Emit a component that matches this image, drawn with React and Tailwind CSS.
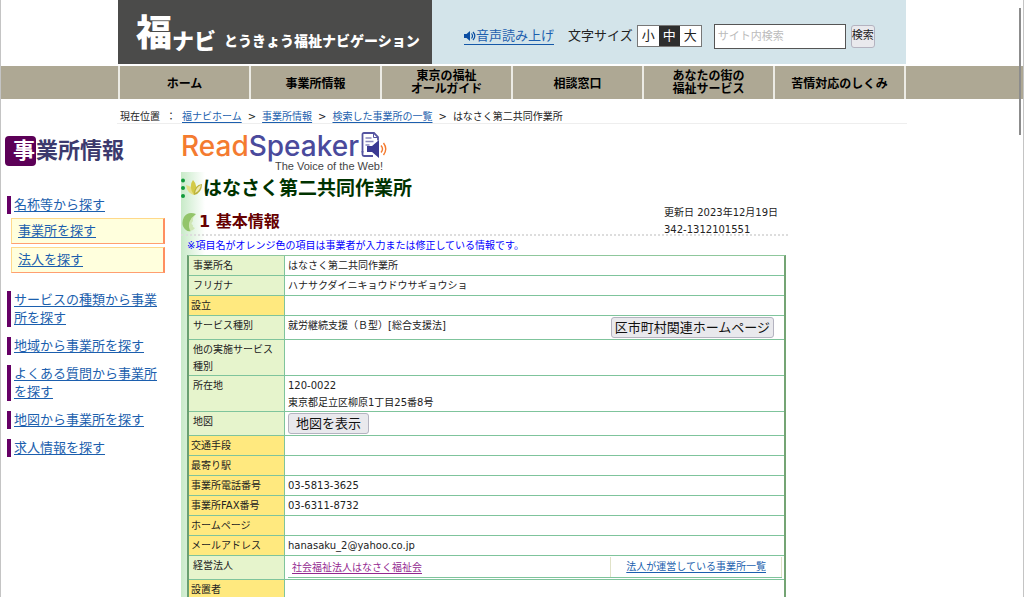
const base = "font-['DejaVu_Sans','Noto_Sans_CJK_JP',sans-serif]";

function SiteLogo() {
  return (
    <a href="#home" className="flex h-16 w-[314px] items-start bg-[#4b4b4a] pl-[18px] pt-3 font-['Noto_Sans_CJK_JP',sans-serif] font-black text-white">
      <span className="text-4xl leading-9">福</span>
      <span className="pt-[15px] text-[22px] leading-6">ナビ</span>
      <span className="pl-2 pt-[18px] text-sm leading-5">とうきょう福祉ナビゲーション</span>
    </a>
  );
}

function SoundIcon() {
  return (
    <svg viewBox="0 0 12 12" className="h-3 w-3" fill="none" stroke="#0a4da2" strokeWidth="1.2">
      <path d="M0 4h2.5L6 1v10L2.5 8H0z" fill="#0a4da2" stroke="none" />
      <path d="M7.5 3.5q2 2.5 0 5M9 2q3.6 4 0 8" />
    </svg>
  );
}

function Header() {
  const size = "h-5 w-[21px] text-[13px] leading-5";
  return (
    <header className="mx-auto flex h-16 w-[788px] bg-[#d3e4ea]">
      <SiteLogo />
      <div className="flex items-center pl-8 pt-2 text-[13px] text-[#222]">
        <a href="#voice" className="flex items-center border-b border-[#1558a8] leading-4 text-[#1c5fae]">
          <SoundIcon />
          音声読み上げ
        </a>
        <span className="pl-[14px]">文字サイズ</span>
        <div className="ml-1 flex border border-[#777] bg-white">
          <button className={size}>小</button>
          <button className={size + " bg-[#2e2e2e] text-white"}>中</button>
          <button className={size}>大</button>
        </div>
        <input
          type="text"
          aria-label="サイト内検索"
          placeholder="サイト内検索"
          className="ml-3 h-[25px] w-[132px] border border-[#555] bg-white px-[3px] text-[11px] placeholder:text-[#bbb]"
        />
        <button className="ml-[5px] h-[23px] w-6 rounded-[3px] border border-[#b4b3c0] bg-[#e9e9ed] text-[11px]">検索</button>
      </div>
    </header>
  );
}

const navItems = [
  ["ホーム"],
  ["事業所情報"],
  ["東京の福祉", "オールガイド"],
  ["相談窓口"],
  ["あなたの街の", "福祉サービス"],
  ["苦情対応のしくみ"],
];

function Nav() {
  return (
    <nav className="mt-0.5 bg-[#aea894]">
      <ul className="mx-auto flex h-[33px] w-[788px] border-l-2 border-[#ecebe4]">
        {navItems.map((lines) => (
          <li key={lines[0]} className="flex-1 border-r-2 border-[#ecebe4]">
            <a
              href="#nav"
              className={"flex h-full flex-col items-center justify-center text-xs font-bold leading-[13px] text-black " + (lines.length === 1 ? "pt-1" : "")}
            >
              {lines.map((l) => (
                <span key={l}>{l}</span>
              ))}
            </a>
          </li>
        ))}
      </ul>
    </nav>
  );
}

function Breadcrumb() {
  const link = "text-[#1c5fae] underline underline-offset-2";
  return (
    <div className="mx-auto flex h-[25px] w-[790px] items-end gap-[6px] border-b border-[#eee] pl-[3px] text-[10px] leading-3 text-[#222]">
      <span>現在位置</span>
      <span>：</span>
      <a href="#top" className={link}>福ナビホーム</a>
      <span>&gt;</span>
      <a href="#office" className={link}>事業所情報</a>
      <span>&gt;</span>
      <a href="#list" className={link}>検索した事業所の一覧</a>
      <span>&gt;</span>
      <span>はなさく第二共同作業所</span>
    </div>
  );
}

function Sidebar() {
  const item = "border-l-4 border-[#660066] pl-[3px] leading-[18px]";
  const link = "text-[#1c5fae] underline underline-offset-2";
  const sub = "block border border-b-[#ff9f70] border-l-[#ffd98a] border-r-2 border-r-[#ff8f60] border-t-[#ffd98a] bg-[#ffffdd] px-[6px] text-[13px] leading-6 text-[#1c5fae] underline underline-offset-2";
  return (
    <aside className="w-[158px] shrink-0 pl-1 pt-3 text-[13px]">
      <h2 className="flex items-center font-['Noto_Sans_CJK_JP',sans-serif] text-[22px] font-bold leading-6 text-[#3c3a6e]">
        <span className="rounded-[4px] bg-[#5c0057] pb-[6px] pl-2 pr-px text-white">事</span>
        <span className="pb-[6px]">業所情報</span>
      </h2>
      <div className="pl-[2px] pt-[30px]">
        <p className={item}><a href="#name" className={link}>名称等から探す</a></p>
        <div className="-mr-[6px] flex flex-col gap-[3px] pl-[4px] pt-1">
          <a href="#s1" className={sub}>事業所を探す</a>
          <a href="#s2" className={sub}>法人を探す</a>
        </div>
        <div className="flex flex-col gap-[10px] pt-[18px]">
          <p className={item}><a href="#kind" className={link}>サービスの種類から事業所を探す</a></p>
          <p className={item}><a href="#area" className={link}>地域から事業所を探す</a></p>
          <p className={item}><a href="#faq" className={link}>よくある質問から事業所を探す</a></p>
          <p className={item}><a href="#map" className={link}>地図から事業所を探す</a></p>
          <p className={item}><a href="#job" className={link}>求人情報を探す</a></p>
        </div>
      </div>
    </aside>
  );
}

function ReadSpeaker() {
  return (
    <a href="#readspeaker" className="flex h-10 w-[210px] items-start" aria-label="ReadSpeaker">
      <span className="flex flex-col font-['Inter',sans-serif] text-[28px] font-medium leading-7 text-[#4a4a9c]">
        <span><span className="text-[#f47b30]">Read</span>Speaker</span>
        <span className="-mr-6 self-end font-['Liberation_Sans',sans-serif] text-[11px] font-normal leading-3 text-[#444]">The Voice of the Web!</span>
      </span>
      <svg viewBox="0 0 26 28" className="ml-0.5 h-7 w-[26px]" fill="none">
        <path d="M1.500 20.500V2.500q0-1.500 1.500-1.500h10l4 4v3.500" stroke="#5554a0" strokeWidth="1.800" fill="#fff" />
        <path d="M1.500 19v3.500q0 1.500 1.500 1.500h9" stroke="#5554a0" strokeWidth="1.800" />
        <path d="M12.500 1v4.500H17" stroke="#5554a0" />
        <path d="M4.500 6h6M4.500 9.500h8M4.500 13h4" stroke="#8a89bd" strokeWidth="1.400" />
        <path d="M6 14h5l7-6v18l-7-6H6z" fill="#3b3a92" />
        <path d="M20 13.500q3 3.500 0 7M22.500 11q4.500 6 0 12" stroke="#f47b30" strokeWidth="1.400" />
      </svg>
    </a>
  );
}

function SproutIcon() {
  return (
    <svg viewBox="0 0 22 24" className="h-6 w-[22px]">
      <g fill="#109a3a"><circle cx="2" cy="4.500" r="2" /><circle cx="2" cy="12" r="2" /><circle cx="2" cy="20" r="2" /></g>
      <path d="M13 19Q6 17 5 9q7 1 8 10" fill="#e4df86" />
      <path d="M13 19Q7 10 12 4q6 6 1 15" fill="#d3ca48" />
      <path d="M13 19Q13 9 21 8q0 9-8 11" fill="#b9b13a" />
      <path d="M14 17q1-6 6-8-1 6-6 8" fill="#efe9ac" />
    </svg>
  );
}

function LeafIcon() {
  return (
    <svg viewBox="0 0 18 22" className="h-[22px] w-[18px]">
      <path d="M15 3Q7 0 3 6q-4 8 2 13 2 2 5 1Q5 12 15 3" fill="#93c56a" />
      <path d="M15 3Q5 10 9 20q3 0 5-3-3-1-2-3-3-1 0-4-1-3 3-7" fill="#cfe6b4" />
    </svg>
  );
}

const grayButton = "h-[21px] rounded-[3px] border border-[#b4b3c0] bg-[#e9e9ed] text-[13px] leading-[18px] text-[#111]";

const rows = [
  { label: "事業所名", value: "はなさく第二共同作業所" },
  { label: "フリガナ", value: "ハナサクダイニキョウドウサギョウショ" },
  { label: "設立", input: true },
  {
    label: "サービス種別",
    tall: "h-6",
    value: (
      <div className="flex items-start justify-between pr-2">
        就労継続支援（Ｂ型）[総合支援法]
        <button className={grayButton + " px-[3px]"}>区市町村関連ホームページ</button>
      </div>
    ),
  },
  { label: "他の実施サービス種別", tall: "h-9" },
  { label: "所在地", tall: "h-9", value: <>120-0022<br />東京都足立区柳原1丁目25番8号</> },
  { label: "地図", tall: "h-6", value: <button className={grayButton + " block px-[7px]"}>地図を表示</button> },
  { label: "交通手段", input: true },
  { label: "最寄り駅", input: true },
  { label: "事業所電話番号", input: true, value: "03-5813-3625" },
  { label: "事業所FAX番号", input: true, value: "03-6311-8732" },
  { label: "ホームページ", input: true },
  { label: "メールアドレス", input: true, value: "hanasaku_2@yahoo.co.jp" },
  {
    label: "経営法人",
    tall: "h-6",
    value: (
      <div className="flex h-[21px] items-center border-b border-[#7fc49c] pl-1">
        <a href="#corp" className="flex-1 text-[#93278f] underline underline-offset-2">社会福祉法人はなさく福祉会</a>
        <span className="h-full border-x border-[#e0e2c8] px-[15px] pt-px">
          <a href="#offices" className="text-[#1c5fae] underline underline-offset-2">法人が運営している事業所一覧</a>
        </span>
      </div>
    ),
  },
  { label: "設置者", input: true },
];

function InfoTable() {
  return (
    <table className="w-[599px] border-separate border-spacing-0 border-l-2 border-r-2 border-t border-l-[#6a9f70] border-r-[#74a474] border-t-[#8fc79c] bg-white text-left text-[10px] leading-[17px] text-[#222]">
      <tbody>
        {rows.map((r) => (
          <tr key={r.label} className={r.tall || "h-5"}>
            <th className={"w-[96px] border-b border-r border-[#7fc49c] pt-px align-top font-normal " + (r.input ? "bg-[#ffe97f] pl-0.5" : "bg-[#e6f4cc] px-1")}>
              {r.label}
            </th>
            <td className="border-b border-[#7fc49c] pl-[3px] pr-0.5 pt-px align-top">{r.value}</td>
          </tr>
        ))}
      </tbody>
    </table>
  );
}

function Content() {
  return (
    <main className="w-[607px] shrink-0 pt-2">
      <ReadSpeaker />
      <div className="bg-linear-to-r from-[#c8eac8] from-0% to-transparent to-[24px] pb-10">
        <h1 className="flex h-8 items-center text-[19px] font-bold text-[#003300]">
          <SproutIcon />
          はなさく第二共同作業所
        </h1>
        <div className="flex h-8 items-end justify-between border-b-2 border-dotted border-[#ddd] pr-1">
          <h2 className="flex items-center text-base font-bold leading-6 text-[#660000]">
            <LeafIcon />
            1 基本情報
          </h2>
          <p className="-mb-1 w-[120px] text-[10px] leading-[17px] text-[#222]">更新日 2023年12月19日<br />342-1312101551</p>
        </div>
        <p className="pl-[6px] pt-px text-[10px] leading-[18px] text-[#0000ff]">※項目名がオレンジ色の項目は事業者が入力または修正している情報です。</p>
        <div className="pl-[6px]">
          <InfoTable />
        </div>
      </div>
    </main>
  );
}

export default function App() {
  return (
    <div className={"relative h-screen overflow-hidden border-x border-[#c4c4c4] bg-white " + base}>
      <Header />
      <Nav />
      <Breadcrumb />
      <div className="flex gap-[22px]">
        <Sidebar />
        <Content />
      </div>
      <div className="absolute right-0.5 top-2 h-[127px] w-0.5 bg-[#8c8c8c]" />
    </div>
  );
}
